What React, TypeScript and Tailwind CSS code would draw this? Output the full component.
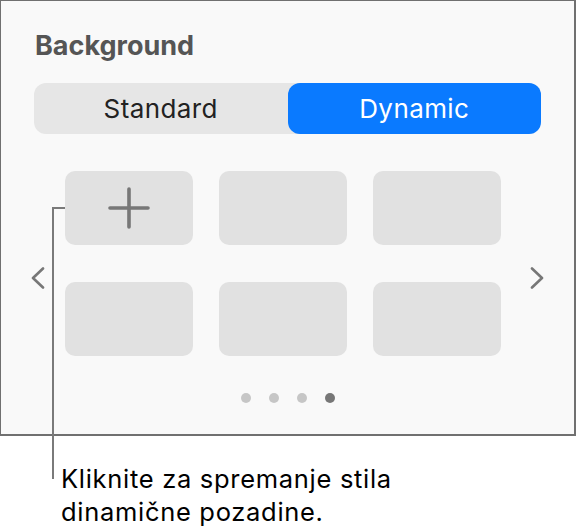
import React from "react";

const font = { fontFamily: "Inter, 'Noto Sans', sans-serif" };

function Chevron({ dir }: { dir: "left" | "right" }) {
  const d = dir === "left" ? "M12 1.5 L2 11 L12 20.5" : "M2 1.5 L12 11 L2 20.5";
  return (
    <svg width="14" height="22" viewBox="0 0 14 22" className="shrink-0 self-start mt-[96px]">
      <path d={d} fill="none" stroke="#777" strokeWidth="2.6" strokeLinecap="round" strokeLinejoin="round" />
    </svg>
  );
}

function Tile({ plus }: { plus?: boolean }) {
  return (
    <div className="h-[74px] rounded-[10px] bg-[#e1e1e1] flex items-center justify-center">
      {plus && (
        <svg width="42" height="42" viewBox="0 0 42 42">
          <path d="M21 2 V40 M2 21 H40" stroke="#777" strokeWidth="3.6" strokeLinecap="round" />
        </svg>
      )}
    </div>
  );
}

export default function App() {
  const dots = [false, false, false, true];

  return (
    <div className="relative w-[577px] h-[531px] bg-white overflow-hidden" style={font}>
      <div className="w-[576px] h-[436px] bg-[#f9f9f9] border-l border-t border-r-2 border-b-2 border-[#707070] px-[33px] pt-[31px] flex flex-col">
        <h2 className="text-[27px] leading-none font-bold text-[#555] pl-px">Background</h2>

        <div className="mt-[24px] h-[51px] rounded-[12px] bg-[#e6e6e6] flex tracking-[0.4px]">
          <div className="flex-1 flex items-center justify-center text-[26px] text-[#222]">Standard</div>
          <div className="flex-1 flex items-center justify-center text-[26px] text-white bg-[#0a7aff] rounded-[12px]">
            Dynamic
          </div>
        </div>

        <div className="mt-[37px] -ml-[3px] flex">
          <Chevron dir="left" />
          <div className="ml-[20px] w-[436px] shrink-0 grid grid-cols-3 gap-x-[26px] gap-y-[37px]">
            <Tile plus />
            <Tile />
            <Tile />
            <Tile />
            <Tile />
            <Tile />
          </div>
          <div className="ml-[29px] shrink-0">
            <Chevron dir="right" />
          </div>
        </div>

        <div className="mt-[37px] flex justify-center gap-[18px]">
          {dots.map((on, i) => (
            <span key={i} className={on ? "w-[10px] h-[10px] rounded-full bg-[#777]" : "w-[10px] h-[10px] rounded-full bg-[#c6c6c6]"} />
          ))}
        </div>
      </div>

      <div className="mt-[26px] pl-[61px] text-[25.5px] leading-[33px] tracking-[0.7px] text-black">
        Kliknite za spremanje stila
        <br />
        dinamične pozadine.
      </div>

      <div className="absolute left-[52px] top-[207px] w-[13px] h-[2px] bg-[#7a7a7a]" />
      <div className="absolute left-[52px] top-[207px] w-[2px] h-[272px] bg-[#7a7a7a]" />
    </div>
  );
}
